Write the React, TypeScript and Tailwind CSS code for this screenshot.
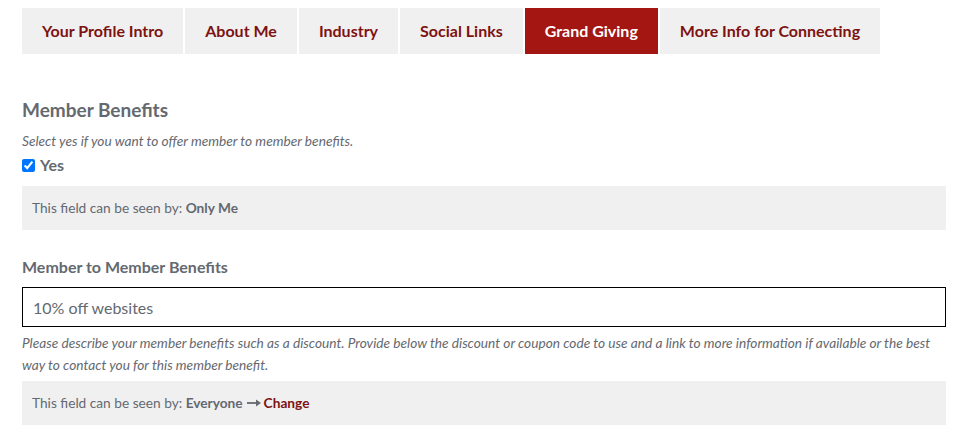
import { useState } from "react";

const tabs = [
  "Your Profile Intro",
  "About Me",
  "Industry",
  "Social Links",
  "Grand Giving",
  "More Info for Connecting",
];

export default function App() {
  const [active, setActive] = useState("Grand Giving");
  const [offer, setOffer] = useState(true);
  const [benefit, setBenefit] = useState("10% off websites");

  return (
    <main
      className="min-h-screen bg-white px-[22px] pt-2 text-[#646970]"
      style={{ fontFamily: "Lato, 'Open Sans', sans-serif" }}
    >
      <nav className="flex gap-[2px]">
        {tabs.map((tab) => (
          <button
            key={tab}
            onClick={() => setActive(tab)}
            className={
              tab === active
                ? "h-[46px] bg-[#a31611] px-5 text-base font-bold text-white"
                : "h-[46px] bg-[#f0f0f0] px-5 text-base font-bold text-[#7d1212]"
            }
          >
            {tab}
          </button>
        ))}
      </nav>

      <section className="mr-[2px] mt-[44px]">
        <h2 className="text-[19px] font-bold leading-6 text-[#646970]">Member Benefits</h2>
        <p className="mt-[9px] text-[13.7px] italic leading-5">
          Select yes if you want to offer member to member benefits.
        </p>
        <label className="mt-1 flex items-center gap-[5px] text-base font-bold leading-5">
          <input
            type="checkbox"
            checked={offer}
            onChange={(event) => setOffer(event.target.checked)}
            className="h-[13px] w-[13px] accent-[#0075ff]"
          />
          Yes
        </label>
        <div className="mt-[11px] flex h-[44px] items-center bg-[#f0f0f0] px-[10px] text-[13.7px]">
          This field can be seen by:&nbsp;<span className="font-bold">Only Me</span>
        </div>

        <h3 className="mt-[27px] text-base font-bold leading-5">Member to Member Benefits</h3>
        <input
          value={benefit}
          onChange={(event) => setBenefit(event.target.value)}
          className="mt-[10px] h-[40px] w-full border border-black px-[10px] text-base text-[#646970] outline-none"
        />
        <p className="mt-[5px] text-[13.7px] italic leading-[22px]">
          Please describe your member benefits such as a discount. Provide below the discount or coupon code to use and a
          link to more information if available or the best way to contact you for this member benefit.
        </p>
        <div className="mt-[5px] flex h-[44px] items-center bg-[#f0f0f0] px-[10px] text-[13.7px]">
          This field can be seen by:&nbsp;<span className="font-bold">Everyone</span>
          <svg viewBox="0 0 14 8" className="ml-[4px] mr-[3px] h-[8px] w-[14px]" aria-hidden="true">
            <path d="M0 3.1h10v1.8H0z" fill="#646970" />
            <path d="M9 0.6L14 4L9 7.4z" fill="#646970" />
          </svg>
          <a href="#" className="font-bold text-[#7d1212]">
            Change
          </a>
        </div>
      </section>
    </main>
  );
}
